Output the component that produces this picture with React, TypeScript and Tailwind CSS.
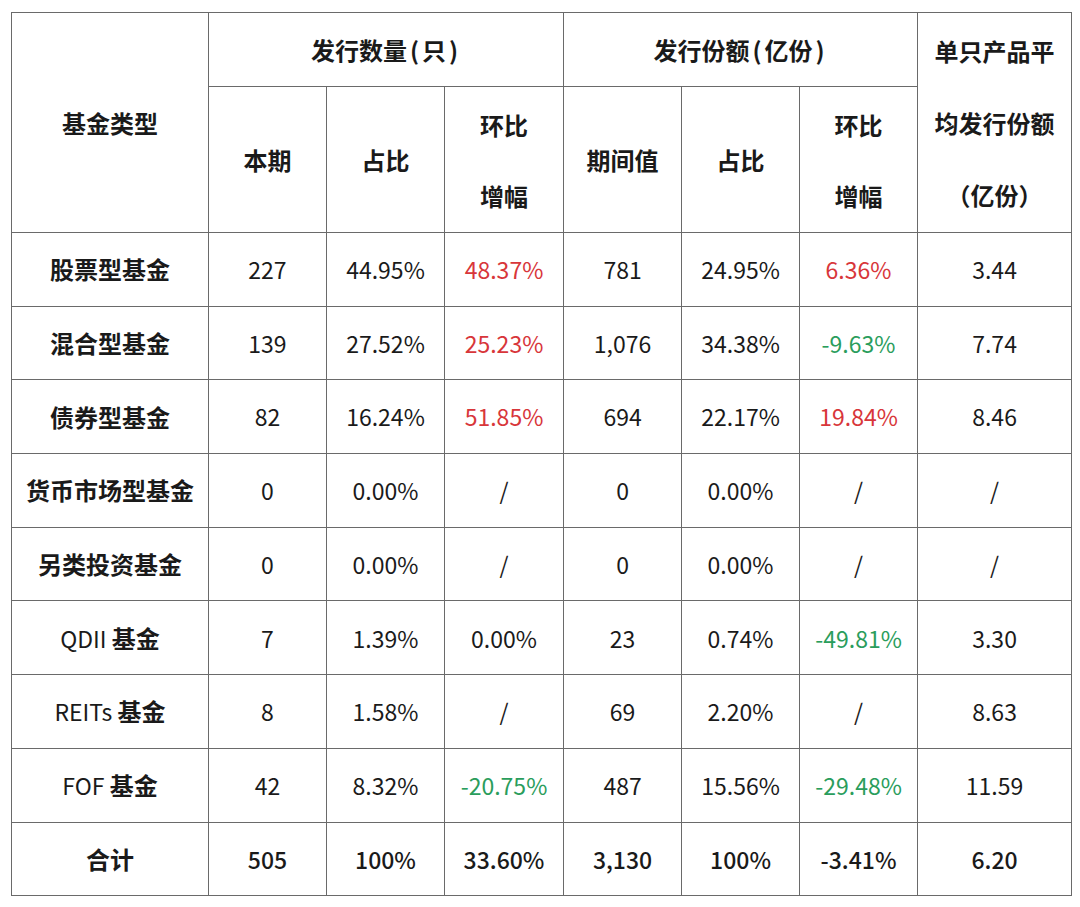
type Tone = 'up' | 'down' | 'plain';

interface Row {
  name: string;
  count: string;
  countShare: string;
  countMoM: string;
  countTone: Tone;
  amount: string;
  amountShare: string;
  amountMoM: string;
  amountTone: Tone;
  avg: string;
}

const rows: Row[] = [
  { name: '股票型基金', count: '227', countShare: '44.95%', countMoM: '48.37%', countTone: 'up', amount: '781', amountShare: '24.95%', amountMoM: '6.36%', amountTone: 'up', avg: '3.44' },
  { name: '混合型基金', count: '139', countShare: '27.52%', countMoM: '25.23%', countTone: 'up', amount: '1,076', amountShare: '34.38%', amountMoM: '-9.63%', amountTone: 'down', avg: '7.74' },
  { name: '债券型基金', count: '82', countShare: '16.24%', countMoM: '51.85%', countTone: 'up', amount: '694', amountShare: '22.17%', amountMoM: '19.84%', amountTone: 'up', avg: '8.46' },
  { name: '货币市场型基金', count: '0', countShare: '0.00%', countMoM: '/', countTone: 'plain', amount: '0', amountShare: '0.00%', amountMoM: '/', amountTone: 'plain', avg: '/' },
  { name: '另类投资基金', count: '0', countShare: '0.00%', countMoM: '/', countTone: 'plain', amount: '0', amountShare: '0.00%', amountMoM: '/', amountTone: 'plain', avg: '/' },
  { name: 'QDII 基金', count: '7', countShare: '1.39%', countMoM: '0.00%', countTone: 'plain', amount: '23', amountShare: '0.74%', amountMoM: '-49.81%', amountTone: 'down', avg: '3.30' },
  { name: 'REITs 基金', count: '8', countShare: '1.58%', countMoM: '/', countTone: 'plain', amount: '69', amountShare: '2.20%', amountMoM: '/', amountTone: 'plain', avg: '8.63' },
  { name: 'FOF 基金', count: '42', countShare: '8.32%', countMoM: '-20.75%', countTone: 'down', amount: '487', amountShare: '15.56%', amountMoM: '-29.48%', amountTone: 'down', avg: '11.59' },
];

const toneClass: Record<Tone, string> = {
  up: 'text-[#d8363a]',
  down: 'text-[#2a9d5c]',
  plain: 'text-[#1a1a1a]',
};

const cell = 'border border-[#6a6a6a] text-center align-middle p-0';
const head = `${cell} font-bold`;

function NameCell({ name }: { name: string }) {
  // latin prefix stays regular weight, the CJK part is bold
  const m = name.match(/^([A-Za-z]+) (.*)$/);
  return (
    <td className={`${cell} text-[24px]`}>
      {m ? (
        <>
          <span className="font-normal text-[23px]">{m[1]} </span>
          <span className="font-bold">{m[2]}</span>
        </>
      ) : (
        <span className="font-bold">{name}</span>
      )}
    </td>
  );
}

function Paren({ children }: { children: string }) {
  return <span className="px-[3px]">{children}</span>;
}

export default function App() {
  return (
    <div className="min-h-[907px] bg-white pl-[11px] pt-[12px] text-[#1a1a1a] [font-family:'Noto_Sans_CJK_SC','Noto_Sans',sans-serif]">
      <table className="table-fixed border-collapse w-[1060px]">
        <colgroup>
          <col className="w-[197px]" />
          <col className="w-[118px]" />
          <col className="w-[118px]" />
          <col className="w-[119px]" />
          <col className="w-[118px]" />
          <col className="w-[118px]" />
          <col className="w-[118px]" />
          <col className="w-[154px]" />
        </colgroup>
        <thead className="text-[24px]">
          <tr className="h-[74px]">
            <th rowSpan={2} className={head}>基金类型</th>
            <th colSpan={3} className={head}>
              发行数量<Paren>(</Paren>只<Paren>)</Paren>
            </th>
            <th colSpan={3} className={head}>
              发行份额<Paren>(</Paren>亿份<Paren>)</Paren>
            </th>
            <th rowSpan={2} className={head}>
              <div className="leading-[72px]">单只产品平</div>
              <div className="leading-[72px]">均发行份额</div>
              <div className="leading-[72px]">（亿份）</div>
            </th>
          </tr>
          <tr className="h-[146px]">
            <th className={head}>本期</th>
            <th className={head}>占比</th>
            <th className={head}>
              <div className="leading-[71px]">环比</div>
              <div className="leading-[71px]">增幅</div>
            </th>
            <th className={head}>期间值</th>
            <th className={head}>占比</th>
            <th className={head}>
              <div className="leading-[71px]">环比</div>
              <div className="leading-[71px]">增幅</div>
            </th>
          </tr>
        </thead>
        <tbody className="text-[23px]">
          {rows.map((r) => (
            <tr key={r.name} className="h-[73.7px]">
              <NameCell name={r.name} />
              <td className={cell}>{r.count}</td>
              <td className={cell}>{r.countShare}</td>
              <td className={`${cell} ${toneClass[r.countTone]}`}>{r.countMoM}</td>
              <td className={cell}>{r.amount}</td>
              <td className={cell}>{r.amountShare}</td>
              <td className={`${cell} ${toneClass[r.amountTone]}`}>{r.amountMoM}</td>
              <td className={cell}>{r.avg}</td>
            </tr>
          ))}
          <tr className="h-[73.7px] font-medium">
            <td className={`${cell} text-[24px] font-bold`}>合计</td>
            <td className={cell}>505</td>
            <td className={cell}>100%</td>
            <td className={cell}>33.60%</td>
            <td className={cell}>3,130</td>
            <td className={cell}>100%</td>
            <td className={cell}>-3.41%</td>
            <td className={cell}>6.20</td>
          </tr>
        </tbody>
      </table>
    </div>
  );
}
